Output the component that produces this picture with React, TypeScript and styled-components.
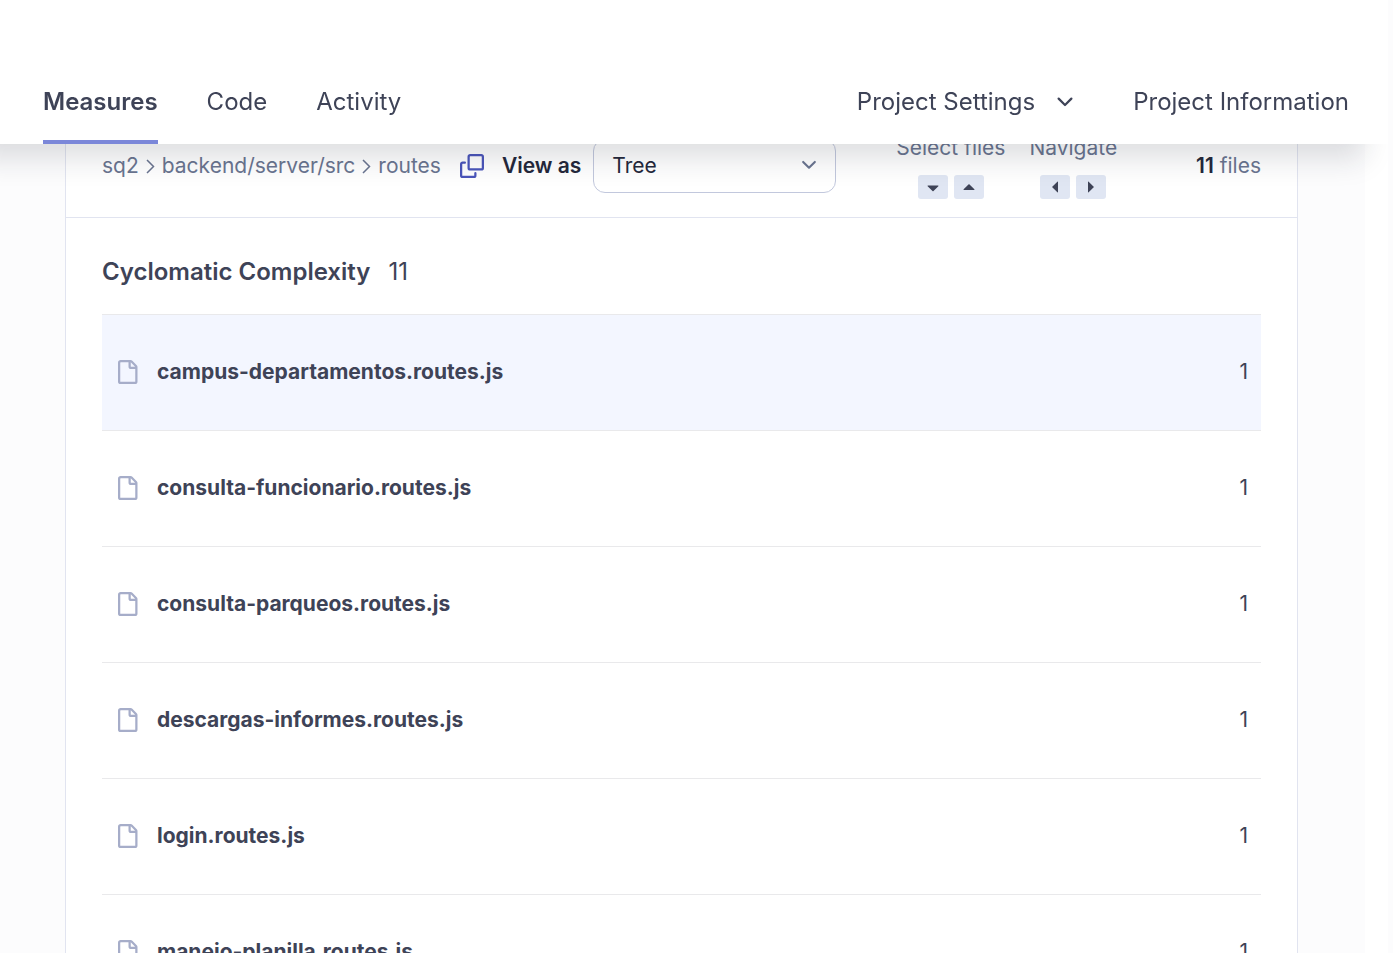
import React from "react";
import styled, { createGlobalStyle } from "styled-components";

const GlobalStyle = createGlobalStyle`
  *, *::before, *::after { box-sizing: border-box; }
  body {
    margin: 0;
    background: #fcfcfd;
    color: #3e4357;
    font-family: Inter, "Liberation Sans", sans-serif;
    font-size: 21px;
    line-height: 32px;
  }
`;

const Page = styled.div`
  height: 100vh;
  margin-right: 5px;
  overflow: hidden;
`;

const Content = styled.div`
  min-height: 100%;
  border-right: 23px solid #fff;
`;

const Header = styled.header`
  position: sticky;
  top: 0;
  z-index: 2;
  display: flex;
  align-items: flex-end;
  justify-content: space-between;
  height: 144px;
  padding: 0 39px 0 43px;
  background: #fff;
  box-shadow: -24px 14px 28px rgba(29, 33, 47, 0.15);
`;

const NavGroup = styled.nav<{ $gap: number }>`
  display: flex;
  gap: ${(p) => p.$gap}px;
`;

const NavLink = styled.a<{ $active?: boolean }>`
  height: 62px;
  padding-top: 4px;
  border-bottom: 4px solid ${(p) => (p.$active ? "#7b87d9" : "transparent")};
  color: #3e4357;
  font-size: 24px;
  font-weight: ${(p) => (p.$active ? 600 : 400)};
  text-decoration: none;
  white-space: nowrap;
`;

const NavMenu = styled.button`
  display: flex;
  align-items: center;
  gap: 18px;
  height: 40px;
  padding: 0;
  border: 0;
  background: none;
  color: #3e4357;
  font: inherit;
  font-size: 24px;
  white-space: nowrap;
`;

const Card = styled.main`
  margin: -30px 67px 0 65px;
  border: 1px solid #e1e4f0;
  border-width: 0 1px;
  background: #fff;
`;

const Toolbar = styled.div`
  display: flex;
  align-items: center;
  height: 104px;
  padding: 0 36px;
  border-bottom: 1px solid #e1e4f0;
  white-space: nowrap;
`;

const Breadcrumbs = styled.nav`
  display: flex;
  align-items: center;
  gap: 7px;
  color: #6a7590;
`;

const Crumb = styled.a`
  color: inherit;
  text-decoration: none;
`;

const IconButton = styled.button`
  display: flex;
  margin: 0 18px 0 19px;
  padding: 0;
  border: 0;
  background: none;
  color: #4b56bb;
`;

const ViewLabel = styled.label`
  margin-right: 12px;
  color: #24283b;
  font-weight: 600;
`;

const SelectBox = styled.div`
  position: relative;
  width: 243px;
  height: 54px;
`;

const Select = styled.select`
  width: 100%;
  height: 100%;
  padding: 0 18px;
  appearance: none;
  border: 1px solid #c2c8dd;
  border-radius: 12px;
  background: #fff;
  color: #24283b;
  font: inherit;
`;

const SelectArrow = styled.span`
  position: absolute;
  top: 15px;
  right: 16px;
  display: flex;
  color: #6a7590;
  pointer-events: none;
`;

const Hints = styled.div`
  display: flex;
  gap: 24px;
  margin-left: 60px;
  color: #6a7590;
`;

const Hint = styled.div`
  display: flex;
  flex-direction: column;
  align-items: center;
  gap: 11px;
`;

const Keys = styled.div`
  display: flex;
  gap: 6px;
`;

const Key = styled.kbd`
  display: flex;
  align-items: center;
  justify-content: center;
  width: 30px;
  height: 24px;
  border-radius: 3px;
  background: #e0e6f3;
  color: #3e4357;
`;

const FileCount = styled.div`
  margin-left: auto;
  color: #6a7590;
`;

const Count = styled.strong`
  color: #24283b;
  font-weight: 600;
`;

const Measure = styled.section`
  padding: 36px;
`;

const MeasureHead = styled.div`
  display: flex;
  gap: 18px;
  margin-bottom: 24px;
  font-size: 24px;
  line-height: 36px;
`;

const MeasureTitle = styled.h2`
  margin: 0;
  font-size: inherit;
  font-weight: 600;
`;

const Table = styled.table`
  width: 100%;
  border-spacing: 0;
  border-top: 1px solid #e9e9eb;
`;

const Row = styled.tr<{ $selected?: boolean }>`
  height: 116px;
  background: ${(p) => (p.$selected ? "#f3f6ff" : "transparent")};
`;

const Cell = styled.td<{ $end?: boolean }>`
  width: ${(p) => (p.$end ? "36px" : "auto")};
  padding: ${(p) => (p.$end ? "0 13px 2px 0" : "0 13px 2px")};
  border-bottom: 1px solid #e9e9eb;
  text-align: ${(p) => (p.$end ? "right" : "left")};
`;

const FileLink = styled.a`
  display: flex;
  align-items: center;
  gap: 18px;
  color: #3e4357;
  font-weight: 700;
  text-decoration: none;
`;

const Glyph = styled.svg`
  display: block;
  flex: none;
  fill: currentColor;
`;

const FileGlyph = styled(Glyph)`
  color: #a6adc9;
`;

const paths = {
  file: "M2 1.75C2 .784 2.784 0 3.75 0h6.586c.464 0 .909.184 1.237.513l2.914 2.914c.329.328.513.773.513 1.237v9.586A1.75 1.75 0 0 1 13.25 16h-9.5A1.75 1.75 0 0 1 2 14.25Zm1.75-.25a.25.25 0 0 0-.25.25v12.5c0 .138.112.25.25.25h9.5a.25.25 0 0 0 .25-.25V6h-2.75A1.75 1.75 0 0 1 9 4.25V1.5Zm6.75.062V4.25c0 .138.112.25.25.25h2.688l-.011-.013-2.914-2.914-.013-.011Z",
  copy: "M0 6.75C0 5.784.784 5 1.75 5h1.5a.75.75 0 0 1 0 1.5h-1.5a.25.25 0 0 0-.25.25v7.5c0 .138.112.25.25.25h7.5a.25.25 0 0 0 .25-.25v-1.5a.75.75 0 0 1 1.5 0v1.5A1.75 1.75 0 0 1 9.25 16h-7.5A1.75 1.75 0 0 1 0 14.25ZM5 1.75C5 .784 5.784 0 6.75 0h7.5C15.216 0 16 .784 16 1.75v7.5A1.75 1.75 0 0 1 14.25 11h-7.5A1.75 1.75 0 0 1 5 9.25Zm1.75-.25a.25.25 0 0 0-.25.25v7.5c0 .138.112.25.25.25h7.5a.25.25 0 0 0 .25-.25v-7.5a.25.25 0 0 0-.25-.25Z",
  chevronDown:
    "M12.78 5.22a.749.749 0 0 1 0 1.06l-4.25 4.25a.749.749 0 0 1-1.06 0L3.22 6.28a.749.749 0 1 1 1.06-1.06L8 8.939l3.72-3.719a.749.749 0 0 1 1.06 0Z",
  down: "m4.427 7.427 3.396 3.396a.25.25 0 0 0 .354 0l3.396-3.396A.25.25 0 0 0 11.396 7H4.604a.25.25 0 0 0-.177.427Z",
  up: "m4.427 9.573 3.396-3.396a.25.25 0 0 1 .354 0l3.396 3.396a.25.25 0 0 1-.177.427H4.604a.25.25 0 0 1-.177-.427Z",
  left: "M9.573 4.427 6.177 7.823a.25.25 0 0 0 0 .354l3.396 3.396a.25.25 0 0 0 .427-.177V4.604a.25.25 0 0 0-.427-.177Z",
  right:
    "m6.427 4.427 3.396 3.396a.25.25 0 0 1 0 .354l-3.396 3.396A.25.25 0 0 1 6 11.396V4.604a.25.25 0 0 1 .427-.177Z",
};

function Icon({ name, size = 24 }: { name: keyof typeof paths; size?: number }) {
  return (
    <Glyph width={size} height={size} viewBox="0 0 16 16" aria-hidden="true">
      <path d={paths[name]} />
    </Glyph>
  );
}

function Separator() {
  return (
    <Glyph width="9" height="16" viewBox="0 0 9 16" aria-hidden="true">
      <path d="M1 2l6.500 6.500L1 15" fill="none" stroke="currentColor" strokeWidth="1.500" />
    </Glyph>
  );
}

const files = [
  "campus-departamentos.routes.js",
  "consulta-funcionario.routes.js",
  "consulta-parqueos.routes.js",
  "descargas-informes.routes.js",
  "login.routes.js",
  "manejo-planilla.routes.js",
];

export default function App() {
  return (
    <>
      <GlobalStyle />
      <Page>
        <Header>
          <NavGroup $gap={49}>
            <NavLink href="#measures" $active>
              Measures
            </NavLink>
            <NavLink href="#code">Code</NavLink>
            <NavLink href="#activity">Activity</NavLink>
          </NavGroup>
          <NavGroup $gap={56}>
            <NavMenu type="button">
              Project Settings
              <Icon name="chevronDown" />
            </NavMenu>
            <NavLink href="#information">Project Information</NavLink>
          </NavGroup>
        </Header>
        <Content>
          <Card>
            <Toolbar>
              <Breadcrumbs aria-label="Breadcrumb">
                <Crumb href="#sq2">sq2</Crumb>
                <Separator />
                <Crumb href="#src">backend/server/src</Crumb>
                <Separator />
                <Crumb href="#routes">routes</Crumb>
              </Breadcrumbs>
              <IconButton type="button" aria-label="Copy path">
                <Icon name="copy" />
              </IconButton>
              <ViewLabel htmlFor="view">View as</ViewLabel>
              <SelectBox>
                <Select id="view" defaultValue="Tree">
                  <option>Tree</option>
                </Select>
                <SelectArrow>
                  <Icon name="chevronDown" size={22} />
                </SelectArrow>
              </SelectBox>
              <Hints>
                <Hint>
                  Select files
                  <Keys>
                    <Key><Icon name="down" /></Key>
                    <Key><Icon name="up" /></Key>
                  </Keys>
                </Hint>
                <Hint>
                  Navigate
                  <Keys>
                    <Key><Icon name="left" /></Key>
                    <Key><Icon name="right" /></Key>
                  </Keys>
                </Hint>
              </Hints>
              <FileCount>
                <Count>11</Count> files
              </FileCount>
            </Toolbar>
            <Measure>
              <MeasureHead>
                <MeasureTitle>Cyclomatic Complexity</MeasureTitle>
                <span>11</span>
              </MeasureHead>
              <Table>
                <tbody>
                  {files.map((file, i) => (
                    <Row key={file} $selected={i === 0}>
                      <Cell>
                        <FileLink href={`#${file}`}>
                          <FileGlyph width="24" height="24" viewBox="0 0 16 16" aria-hidden="true">
                            <path d={paths.file} />
                          </FileGlyph>
                          {file}
                        </FileLink>
                      </Cell>
                      <Cell $end>1</Cell>
                    </Row>
                  ))}
                </tbody>
              </Table>
            </Measure>
          </Card>
        </Content>
      </Page>
    </>
  );
}
